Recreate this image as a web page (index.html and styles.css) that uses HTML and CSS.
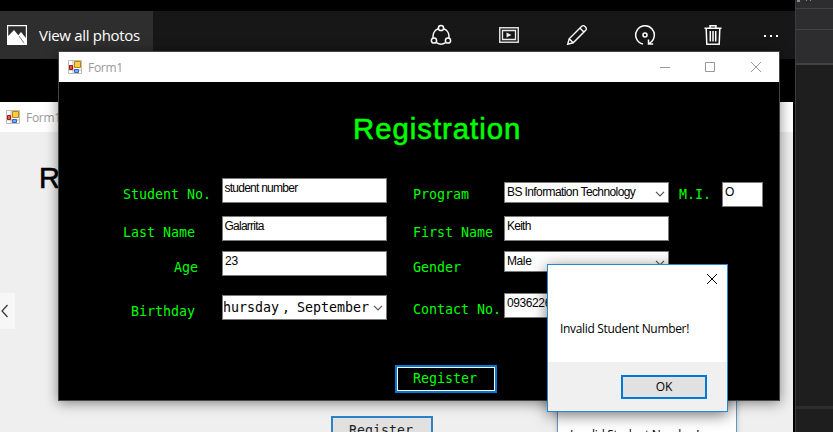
FILE: index.html
```html
<!DOCTYPE html>
<html lang="en">
<head>
<meta charset="utf-8">
<title>Form1</title>
<link rel="stylesheet" href="styles.css">
</head>
<body>
<main class="desktop">
  <section class="viewer">
    <header class="toolbar">
      <div class="view-all">
        <svg width="20" height="20" viewBox="0 0 20 20"><path fill="#fff" fill-rule="evenodd" d="M0 0h20v20H0zM1.200 1.200v9.800L7 5l4.300 5.300L14 7l4.800 6V1.200z"/><path d="M12 11l5 7" stroke="#777" fill="none"/></svg>
        <span>View all photos</span>
      </div>
      <nav class="tools">
        <svg width="22" height="22" viewBox="0 0 22 22" fill="none" stroke="#fff" stroke-width="1.5"><circle cx="11" cy="4" r="2.6"/><circle cx="4" cy="16.5" r="2.6"/><circle cx="18" cy="16.5" r="2.6"/><path d="M8.3 4.7C4.500 6.200 2.500 10 3.200 14M13.700 4.700c3.800 1.500 5.800 5.300 5.100 9.300M6.400 18.600c2.700 1.900 6.500 1.900 9.200 0"/></svg>
        <svg width="22" height="22" viewBox="0 0 22 22" fill="none"><path d="M1.750 3.750h18.500v14.500H1.750z" stroke="#ddd" stroke-width="1.500"/><path d="M4.500 6.500h13v9h-13z" stroke="#eee" stroke-width="1.300"/><path d="M8.500 8.500l5 2.500-5 2.500z" fill="#eee"/></svg>
        <svg width="22" height="22" viewBox="0 0 22 22" fill="none" stroke="#fff" stroke-width="1.400"><path d="M1.700 20.300l1.500-5.500L15.700 2.300c2.200-2 6 1.700 4 4L7.200 18.800zM3.200 14.800l4 4M13.900 4.100l4 4"/></svg>
        <svg width="22" height="22" viewBox="0 0 22 22" fill="none" stroke="#fff" stroke-width="1.500"><path d="M9 20.100A9.300 9.300 0 1 1 14.600 19.600M14.500 15.500v4.600h4.700"/><circle cx="11" cy="11" r="2"/></svg>
        <svg width="22" height="22" viewBox="0 0 22 22" fill="none" stroke="#fff" stroke-width="1.500"><path d="M2.500 4.200h17M8 4V1.700h6V4M4.200 4.500l.6 15.700h12.400l.6-15.700M8.300 7v10.500M11 7v10.500M13.700 7v10.500"/></svg>
        <svg width="22" height="22" viewBox="0 0 22 22" fill="#fff"><path d="M3 11h2v2H3zM9 11h2v2H9zM15 11h2v2h-2z"/></svg>
      </nav>
    </header>
    <div class="photo">
      <div class="photo-title">
        <svg class="form-icon" width="14" height="14" viewBox="0 0 14 14"><path d="M.5.500h13v13H.5zM5 0v14M0 10h14" fill="#fff" stroke="#bbb"/><path d="M6.500 1.500h6v6h-6z" fill="#fc4" stroke="#b8860b"/><path d="M1.500 5.500h3v4h-3z" fill="#d65" stroke="#a11"/><path d="M6.500 9.500h4v3h-4z" fill="#7af" stroke="#36b"/></svg>
        <span>Form1</span>
      </div>
      <div class="photo-heading">R</div>
      <div class="photo-button">Register</div>
      <div class="photo-dialog">Invalid Student Number!</div>
      <div class="previous"><svg width="15" height="36" viewBox="0 0 15 36"><path d="M7.500 12L2 18l5.500 6" fill="none" stroke="#333" stroke-width="1.200"/></svg></div>
    </div>
  </section>

  <aside class="editor">
    <div class="menu-strip"><svg width="20" height="2" viewBox="0 0 20 2" fill="#888"><path d="M1 0h3v2H1zM10 0h1v1h-1zM14 0h1v1h-1z"/></svg></div>
    <div class="tab-strip"></div>
    <div class="tool-strip"></div>
    <div class="code-area"></div>
    <div class="output-area"></div>
  </aside>

  <section class="window">
    <header class="titlebar">
      <svg class="form-icon" width="14" height="14" viewBox="0 0 14 14"><path d="M.5.500h13v13H.5zM5 0v14M0 10h14" fill="#fff" stroke="#bbb"/><path d="M6.500 1.500h6v6h-6z" fill="#fc4" stroke="#b8860b"/><path d="M1.500 5.500h3v4h-3z" fill="#d54" stroke="#a11"/><path d="M6.500 9.500h4v3h-4z" fill="#7af" stroke="#36b"/></svg>
      <span class="caption">Form1</span>
      <svg width="102" height="12" viewBox="0 0 102 12" fill="none" stroke="#999"><path d="M0 6.500h10M45.500 1.500h9v9h-9zM91 1l10 10M101 1L91 11"/></svg>
    </header>
    <div class="form">
      <h1>Registration</h1>
      <div class="fields">
        <label class="lead">Student No.</label>
        <div class="input tight">student number</div>
        <label class="second">Program</label>
        <div class="input select lowered program"><span>BS Information Technology</span><svg width="10" height="6" viewBox="0 0 10 6"><path d="M1 .8l4 4 4-4"/></svg></div>
        <label class="initial">M.I.</label>
        <div class="input lowered">O</div>

        <label class="lead">Last Name</label>
        <div class="input tight">Galarrita</div>
        <label class="second">First Name</label>
        <div class="input wide tight">Keith</div>

        <label class="age">Age</label>
        <div class="input digits">23</div>
        <label class="second">Gender</label>
        <div class="input select wide-cell"><span>Male</span><svg width="10" height="6" viewBox="0 0 10 6"><path d="M1 .8l4 4 4-4"/></svg></div>

        <label class="birthday">Birthday</label>
        <div class="input date"><span class="date-text"><span class="day">hursday</span><span class="comma">,</span><span>September</span></span><svg width="10" height="6" viewBox="0 0 10 6"><path d="M1 .8l4 4 4-4"/></svg></div>
        <label class="second">Contact No.</label>
        <div class="input wide">0936226</div>
      </div>
      <button class="register">Register</button>
    </div>
  </section>

  <section class="dialog">
    <div class="message">
      <svg class="close" width="12" height="12" viewBox="0 0 12 12"><path d="M1 1l10 10M11 1L1 11" stroke="#000"/></svg>
      <p>Invalid Student Number!</p>
    </div>
    <footer><button class="ok">OK</button></footer>
  </section>
</main>
</body>
</html>
```
FILE: styles.css
```css
* { box-sizing: border-box; }
body { margin: 0; background: #000; font-family: "Open Sans", sans-serif; }
svg { display: block; flex: none; }
button { font: inherit; padding: 0; border-radius: 0; }
.desktop { position: relative; width: 833px; height: 432px; overflow: hidden; display: flex; }

/* Photo viewer */
.viewer { width: 795px; height: 432px; padding-top: 11px; background: #000; }
.toolbar { height: 48px; background: #171717; display: flex; }
.view-all { width: 153px; background: #2e2e2e; color: #fff; display: flex; align-items: center; gap: 12px; padding-left: 7px; font-size: 15px; letter-spacing: -0.3px; white-space: nowrap; }
.tools { flex: 1; display: flex; gap: 46px; padding: 13px 0 0 277px; }
.tools svg:last-child { margin-left: -9px; }
.photo { position: relative; margin-top: 43px; width: 793px; height: 330px; background: #efefef; overflow: hidden; }
.photo-title { height: 30px; background: #fff; color: #999; display: flex; align-items: center; padding-left: 6px; gap: 6px; font-size: 12px; letter-spacing: -0.3px; }
.photo-heading { margin: 29px 0 0 39px; font: 29px/34px "Liberation Sans", sans-serif; color: #000; -webkit-text-stroke: 0.6px #000; }
.photo-button { position: absolute; left: 331px; top: 314px; width: 102px; height: 28px; border: 2px solid #2b82c4; background: #e1e1e1; padding-right: 2px; font: 13.3px/26px "DejaVu Sans Mono", monospace; text-align: center; color: #222; }
.photo-dialog { position: absolute; left: 557px; top: 250px; width: 180px; height: 90px; border: 1px solid #5a9cc8; background: #fff; padding: 74px 0 0 12px; font-size: 12px; line-height: 16px; letter-spacing: -0.33px; white-space: nowrap; box-shadow: 0 0 5px #0003; }
.previous { position: absolute; left: 0; top: 191px; width: 15px; height: 36px; background: #f7f7f7; }

/* Editor behind the viewer */
.editor { width: 38px; border-left: 1px solid #3b3b3f; background: #1e1e1e; display: flex; flex-direction: column; }
.menu-strip { height: 9px; background: #2d2d30; border-bottom: 1px solid #434346; }
.tab-strip { height: 21px; background: #2d2d30; border-bottom: 1px solid #434346; }
.tool-strip { height: 35px; background: #2d2d30; border-bottom: 2px solid #434346; }
.code-area { height: 344px; border-bottom: 3px solid #2d2d30; }
.output-area { flex: 1; }

/* Registration window */
.window { position: absolute; left: 58px; top: 51px; width: 722px; height: 350px; border: 1px solid #444; background: #000; box-shadow: 0 2px 12px #0007; }
.titlebar { height: 30px; background: #fff; display: flex; align-items: center; padding: 0 17px 0 9px; }
.caption { margin-left: 6px; flex: 1; font-size: 12px; letter-spacing: -0.3px; color: #999; }
.form { height: 318px; display: flex; flex-direction: column; }
h1 { margin: 0; height: 96px; padding: 30px 0 0 294px; color: #0f0; font: 29.3px/34px "Liberation Sans", sans-serif; letter-spacing: 1px; -webkit-text-stroke: 0.6px #0f0; }
.fields { display: grid; grid-template-columns: 163px 165px 117px 165px 53px 41px; grid-template-rows: 38px 35px 42px 72px; align-items: start; }
label, .register { color: #0f0; font: 13.3px/16px "DejaVu Sans Mono", monospace; white-space: pre; }
label { padding-top: 9px; }
.lead { padding-left: 64px; }
.age { padding-left: 115px; }
.birthday { padding: 11px 0 0 72px; }
.second { padding-left: 26px; }
.initial { padding-left: 10px; }
.input { height: 25px; border: 1px solid #7a7a7a; background: #fff; color: #000; padding: 2px 2px 0; font: 12px/15px "Liberation Sans", sans-serif; letter-spacing: -0.4px; white-space: nowrap; }
.lowered { margin-top: 4px; }
.tight { letter-spacing: -0.75px; padding-left: 1.5px; }
.program { letter-spacing: -0.6px; }
.digits { letter-spacing: -0.1px; }
.wide, .wide-cell { grid-column: 4 / 5; }
.wide.tight { padding-left: 2px; }
.wide + label, .wide-cell + label { grid-column: 1; }
.select { height: 21px; display: flex; justify-content: space-between; padding-right: 3px; }
.input svg { margin-top: 6px; fill: none; stroke: #555; stroke-width: 1.2; }
.date { margin-top: 2px; display: flex; justify-content: space-between; padding: 4px 3px 0 1px; font: 13.3px/16px "DejaVu Sans Mono", monospace; letter-spacing: 0; }
.date-text { width: 145px; overflow: hidden; display: flex; justify-content: flex-end; }
.comma { margin: 0 7px 0 3px; }
.date svg { margin-top: 5px; }
.register { margin: 0 0 0 336px; width: 102px; height: 28px; border: 2px solid #0078d7; outline: 1px solid #fff; outline-offset: -3px; background: #000; padding-right: 2px; }

/* Message box */
.dialog { position: absolute; left: 547px; top: 264px; width: 181px; height: 148px; border: 1px solid #2787cf; background: #fff; box-shadow: 0 3px 14px #0008; font-size: 12px; }
.message { height: 97px; display: flex; flex-direction: column; padding-top: 8px; }
.close { margin-left: 158px; }
.message p { margin: 36px 0 0 12px; line-height: 16px; letter-spacing: -0.33px; white-space: nowrap; }
footer { height: 49px; background: #f0f0f0; padding: 13px 0 0 73px; }
.ok { width: 86px; height: 24px; border: 2px solid #0078d7; background: #e1e1e1; color: #000; line-height: 18px; }
```
